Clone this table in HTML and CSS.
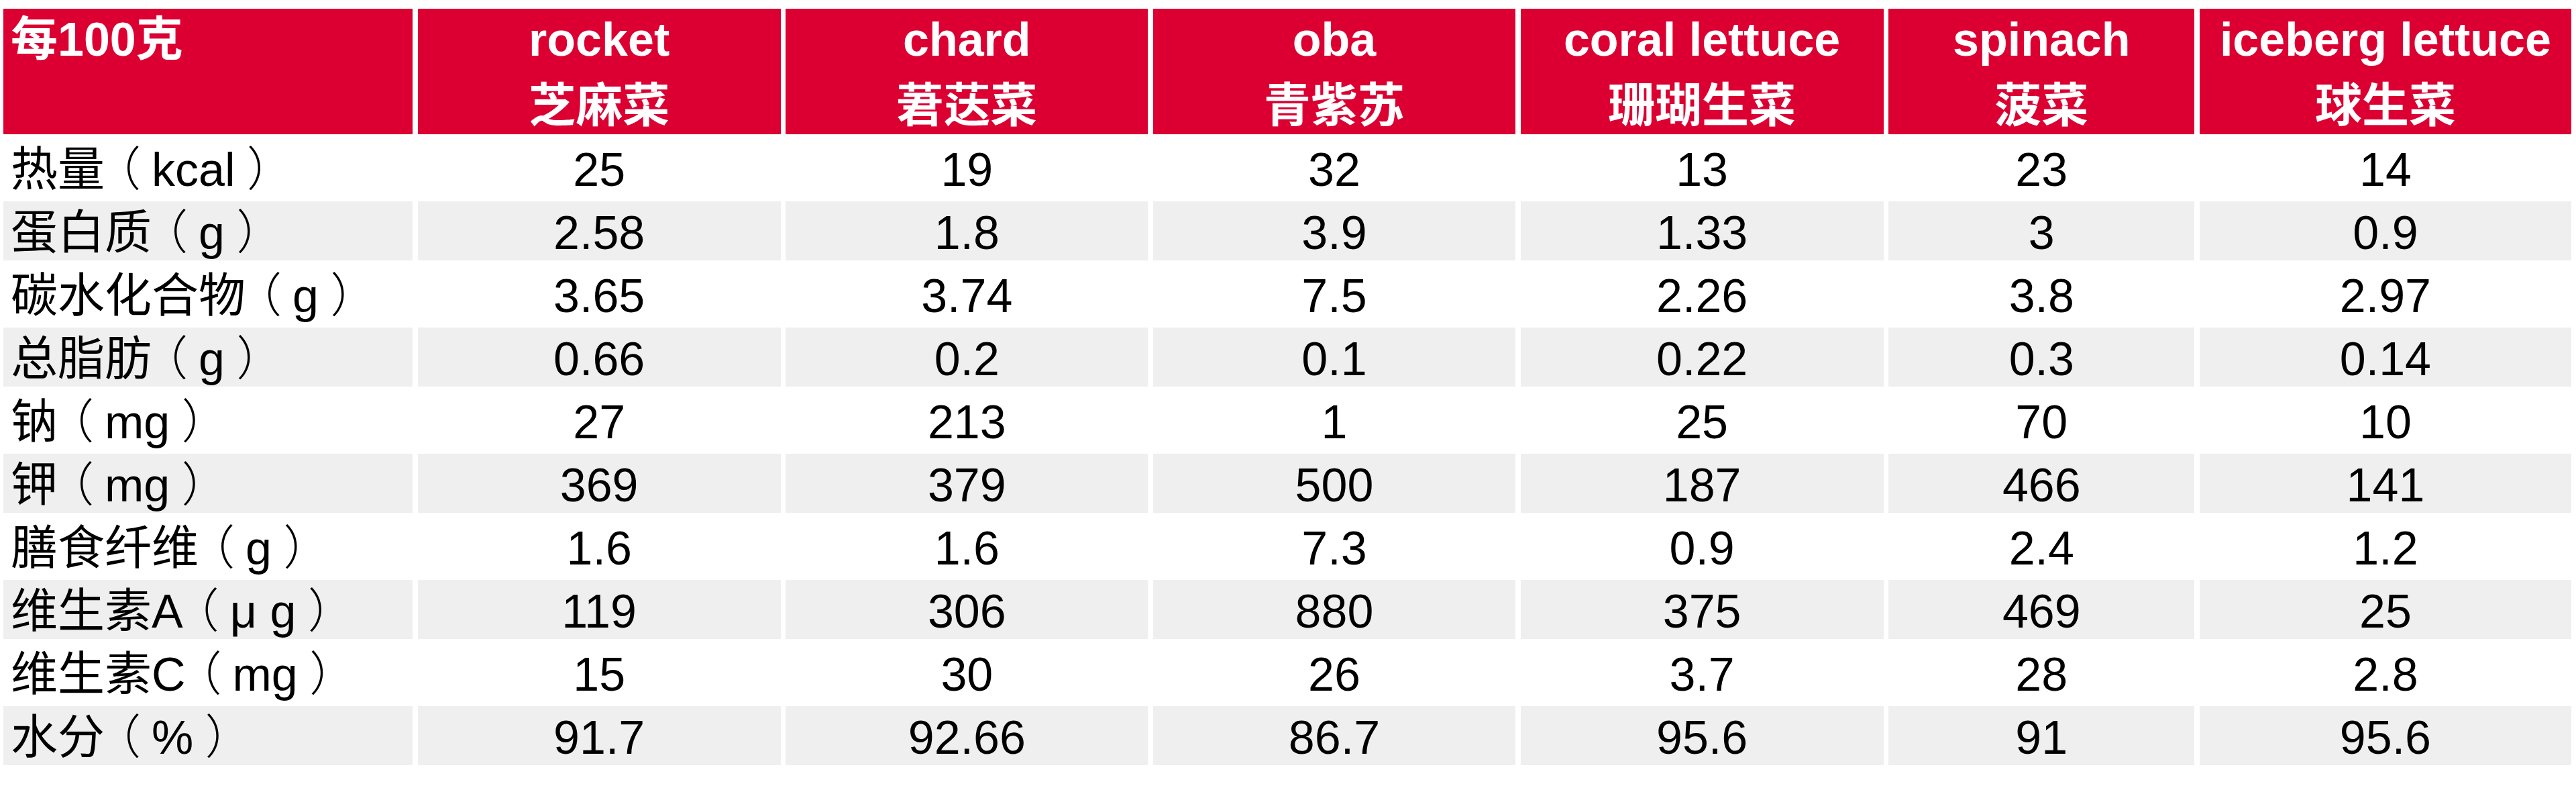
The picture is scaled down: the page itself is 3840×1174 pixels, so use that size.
FILE: index.html
```html
<!DOCTYPE html>
<html lang="zh-CN">
<head>
<meta charset="utf-8">
<title>每100克营养成分</title>
<link rel="stylesheet" href="styles.css">
</head>
<body>
<div class="nutri">
  <div class="row head">
    <div class="cell label"><span class="en">每100克</span></div>
    <div class="cell"><span class="en">rocket</span><span class="zh">芝麻菜</span></div>
    <div class="cell"><span class="en">chard</span><span class="zh">莙荙菜</span></div>
    <div class="cell"><span class="en">oba</span><span class="zh">青紫苏</span></div>
    <div class="cell"><span class="en">coral lettuce</span><span class="zh">珊瑚生菜</span></div>
    <div class="cell"><span class="en">spinach</span><span class="zh">菠菜</span></div>
    <div class="cell"><span class="en">iceberg lettuce</span><span class="zh">球生菜</span></div>
  </div>
  <div class="row">
    <div class="cell label">热量<span class="pl">（</span>kcal<span class="pr">）</span></div>
    <div class="cell">25</div><div class="cell">19</div><div class="cell">32</div><div class="cell">13</div><div class="cell">23</div><div class="cell">14</div>
  </div>
  <div class="row alt">
    <div class="cell label">蛋白质<span class="pl">（</span>g<span class="pr">）</span></div>
    <div class="cell">2.58</div><div class="cell">1.8</div><div class="cell">3.9</div><div class="cell">1.33</div><div class="cell">3</div><div class="cell">0.9</div>
  </div>
  <div class="row">
    <div class="cell label">碳水化合物<span class="pl">（</span>g<span class="pr">）</span></div>
    <div class="cell">3.65</div><div class="cell">3.74</div><div class="cell">7.5</div><div class="cell">2.26</div><div class="cell">3.8</div><div class="cell">2.97</div>
  </div>
  <div class="row alt">
    <div class="cell label">总脂肪<span class="pl">（</span>g<span class="pr">）</span></div>
    <div class="cell">0.66</div><div class="cell">0.2</div><div class="cell">0.1</div><div class="cell">0.22</div><div class="cell">0.3</div><div class="cell">0.14</div>
  </div>
  <div class="row">
    <div class="cell label">钠<span class="pl">（</span>mg<span class="pr">）</span></div>
    <div class="cell">27</div><div class="cell">213</div><div class="cell">1</div><div class="cell">25</div><div class="cell">70</div><div class="cell">10</div>
  </div>
  <div class="row alt">
    <div class="cell label">钾<span class="pl">（</span>mg<span class="pr">）</span></div>
    <div class="cell">369</div><div class="cell">379</div><div class="cell">500</div><div class="cell">187</div><div class="cell">466</div><div class="cell">141</div>
  </div>
  <div class="row">
    <div class="cell label">膳食纤维<span class="pl">（</span>g<span class="pr">）</span></div>
    <div class="cell">1.6</div><div class="cell">1.6</div><div class="cell">7.3</div><div class="cell">0.9</div><div class="cell">2.4</div><div class="cell">1.2</div>
  </div>
  <div class="row alt">
    <div class="cell label">维生素A<span class="pl">（</span>μ g<span class="pr">）</span></div>
    <div class="cell">119</div><div class="cell">306</div><div class="cell">880</div><div class="cell">375</div><div class="cell">469</div><div class="cell">25</div>
  </div>
  <div class="row">
    <div class="cell label">维生素C<span class="pl">（</span>mg<span class="pr">）</span></div>
    <div class="cell">15</div><div class="cell">30</div><div class="cell">26</div><div class="cell">3.7</div><div class="cell">28</div><div class="cell">2.8</div>
  </div>
  <div class="row alt">
    <div class="cell label">水分<span class="pl">（</span>%<span class="pr">）</span></div>
    <div class="cell">91.7</div><div class="cell">92.66</div><div class="cell">86.7</div><div class="cell">95.6</div><div class="cell">91</div><div class="cell">95.6</div>
  </div>
</div>
</body>
</html>
```

FILE: styles.css
```css
html, body {
  margin: 0;
  background: #ffffff;
}

body {
  font-family: "Liberation Sans", "Noto Sans CJK SC", sans-serif;
  color: #000000;
}

.nutri {
  display: grid;
  grid-template-columns: 610px 541px 540px 540px 541px 456px 554px;
  grid-template-rows: 187px repeat(10, 88px);
  column-gap: 7.67px;
  row-gap: 6px;
  padding: 13px 0 0 5px;
  width: max-content;
}

.row {
  display: contents;
}

.cell {
  font-size: 70px;
  line-height: 82px;
  padding-top: 6px;
  text-align: center;
  white-space: nowrap;
  overflow: hidden;
}

.cell.label {
  text-align: left;
  padding-left: 11px;
}

/* full-width parentheses drawn centred in their em box, as in the source font */
.pl,
.pr {
  font-feature-settings: "halt" 1;
  font-weight: 300;
}

.pl {
  padding-left: 0.27em;
  padding-right: 0.23em;
}

.pr {
  padding-left: 0.25em;
  padding-right: 0.25em;
}

.alt .cell {
  background: #efefef;
}

.head .cell {
  background: #dc0032;
  color: #ffffff;
  font-weight: bold;
  padding-top: 0;
}

.head .en,
.head .zh {
  display: block;
}

.head .en {
  line-height: 93px;
}

.head .zh {
  padding-top: 11px;
  line-height: 83px;
}
```
